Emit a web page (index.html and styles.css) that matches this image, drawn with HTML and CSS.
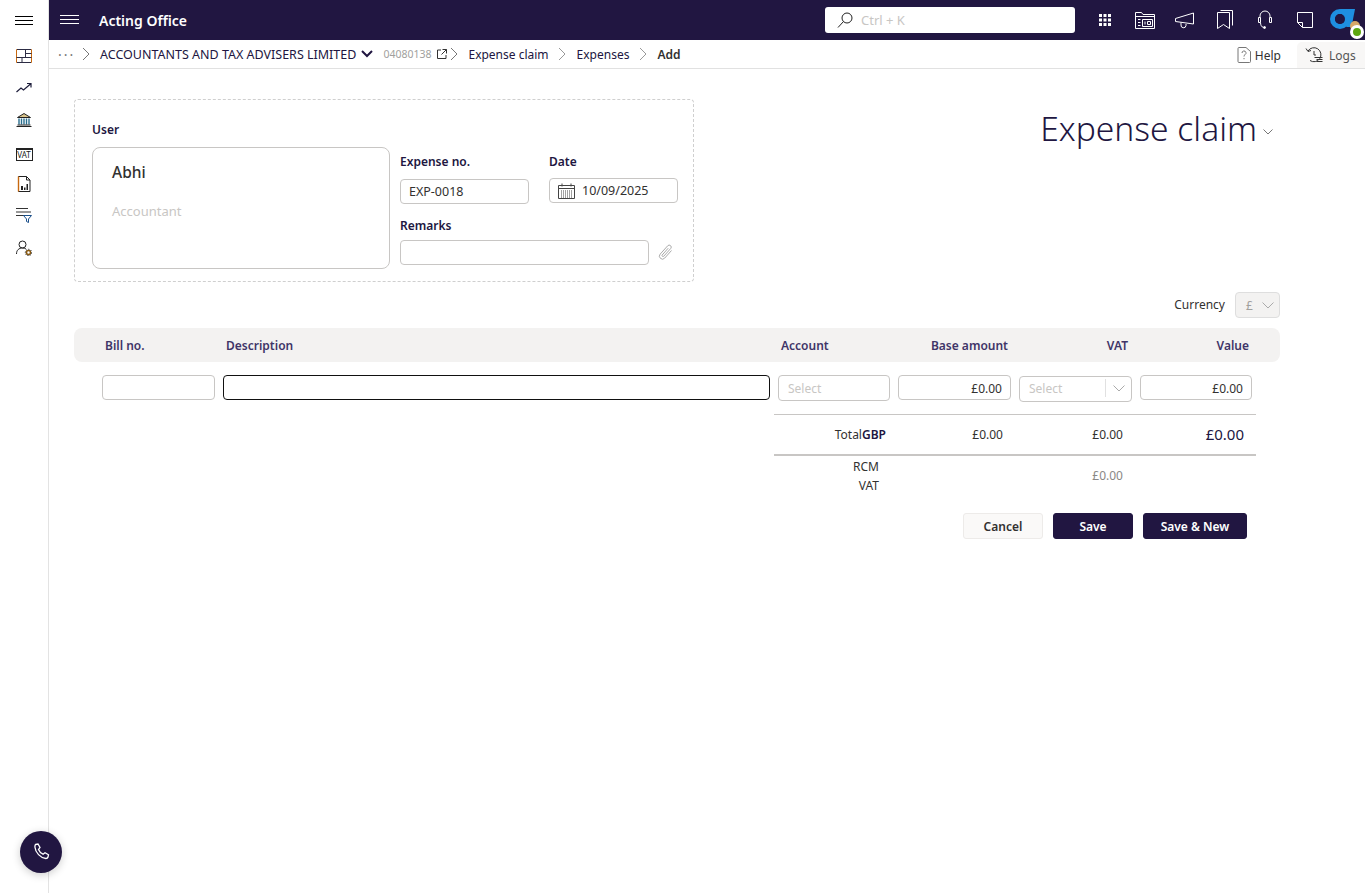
FILE: index.html
```html
<!DOCTYPE html>
<html lang="en">
<head>
    <meta charset="UTF-8">
    <meta name="viewport" content="width=device-width, initial-scale=1.0">
    <title>Acting Office - Expense claim</title>
    <link rel="stylesheet" href="styles.css">
</head>
<body>
    <!-- Left icon rail -->
    <aside class="rail">
        <svg class="rail-menu" width="18" height="10" viewBox="0 0 18 10"><path d="M0 .5h18M0 4.5h18M0 8.5h18" stroke="#000" fill="none"/></svg>
        <svg class="rail-icon" viewBox="0 0 16 16"><path d="M.5 1.5h15v13H.5z" fill="none" stroke="#c8690f"/><path d="M1 1.5h14M1 14.5h14M9.5 1.5v8M9.5 5.5h6M.5 9.5h15M6 9.5v5" fill="none" stroke="#2c2c44"/></svg>
        <svg class="rail-icon" viewBox="0 0 16 16"><path d="M.5 12l4.5-4 2.500 2 7-6M11 3.500h4v4" fill="none" stroke="#1c1c3a" stroke-width="1.200"/></svg>
        <svg class="rail-icon" viewBox="0 0 16 16"><path d="M1.500 5.500L8 1.500l6.500 4z" fill="#d9c48b" stroke="#222"/><path d="M3 6.500v6M5.500 6.500v6M8 6.500v6M10.500 6.500v6M13 6.500v6" stroke="#2a6f8f" stroke-width="1.400"/><path d="M1.500 13h13M.5 14.500h15" stroke="#222"/></svg>
        <span class="rail-vat">VAT</span>
        <svg class="rail-icon rail-report" viewBox="0 0 16 16"><path d="M2.500 .5h8l3.500 3.500v11.500h-11.500z" fill="none" stroke="#222"/><path d="M2.500 .5v15" stroke="#c8690f" stroke-width="1.400"/><path d="M10.500 .5v3.500h3.500" fill="none" stroke="#222"/><path d="M5 10h2v4h-2zM8 11.500h1.500v2.500h-1.500zM10.500 8h1.500v6h-1.500z" fill="#222"/></svg>
        <svg class="rail-icon rail-filter" viewBox="0 0 16 16"><path d="M0 1.500h12M0 5h15M0 8.500h8" fill="none" stroke="#333"/><path d="M7.500 8.500h8l-3 3.500v3.500l-2-1v-2.500z" fill="none" stroke="#1a4f8a"/></svg>
        <svg class="rail-icon" viewBox="0 0 16 16"><circle cx="6.500" cy="4.500" r="3.500" fill="none" stroke="#222"/><path d="M.5 14c0-4 2.500-6 6-6 1.500 0 2.500.4 3.500 1" fill="none" stroke="#222"/><circle cx="12.500" cy="12.500" r="2" fill="none" stroke="#8a5a12" stroke-width="1.500"/><circle cx="12.500" cy="12.500" r="3.200" fill="none" stroke="#222" stroke-dasharray="1.200 1.200"/></svg>
    </aside>

    <div class="main">
        <!-- Top bar -->
        <header class="topbar">
            <svg class="top-menu" width="19" height="10" viewBox="0 0 19 10"><path d="M0 .5h19M0 4.500h19M0 8.500h19" stroke="#fff" fill="none"/></svg>
            <span class="brand">Acting Office</span>
            <div class="search">
                <svg width="16" height="16" viewBox="0 0 16 16"><circle cx="10" cy="6" r="5" fill="none" stroke="#222"/><path d="M6.500 9.500l-5.500 6" stroke="#222" fill="none"/></svg>
                <span>Ctrl + K</span>
            </div>
            <div class="top-icons">
                <span class="top-btn"><svg width="14" height="14" viewBox="0 0 14 14" fill="#fff"><path d="M1 1h3v3h-3zM5.500 1h3v3h-3zM10 1h3v3h-3zM1 5.500h3v3h-3zM5.500 5.500h3v3h-3zM10 5.500h3v3h-3zM1 10h3v3h-3zM5.500 10h3v3h-3zM10 10h3v3h-3z"/></svg></span>
                <span class="top-btn"><svg width="20" height="20" viewBox="0 0 20 20" fill="none" stroke="#fff"><path d="M.5 18.500v-16h6l1.500 2h11.500v14z"/><path d="M1 6.500h18"/><path d="M7.500 9.500h10v7h-10z"/><path d="M3 9.500h2.500M3 12.500h2.500M3 15.500h2.500M10 11.500v3M12.500 11.500h3v3h-3z"/></svg></span>
                <span class="top-btn"><svg width="20" height="18" viewBox="0 0 20 18" fill="none" stroke="#fff"><path d="M.5 7.500l18-5.500v11l-18-2.500z"/><path d="M6 11.500v2.500a2.500 2.500 0 0 0 5 .5v-1.500"/></svg></span>
                <span class="top-btn"><svg width="16" height="20" viewBox="0 0 16 20" fill="none" stroke="#fff"><path d="M.5 2.500h12v16l-6-4-6 4z"/><path d="M3.500.5h12v15"/></svg></span>
                <span class="top-btn"><svg width="16" height="20" viewBox="0 0 16 20" fill="none" stroke="#fff"><path d="M3 7.500v-1.500a5 5 0 0 1 10 0v1.500"/><path d="M1.500 7.500h2v5h-2zM12.500 7.500h2v5h-2z"/><path d="M3.500 12.500c0 2.500 1 4.500 3 5"/><circle cx="7.500" cy="17.500" r="1" fill="#fff"/></svg></span>
                <span class="top-btn"><svg width="18" height="18" viewBox="0 0 18 18" fill="none" stroke="#fff"><path d="M1.500 1.500h15v15h-10l-5-5z"/><path d="M1.500 11.500h5v5"/></svg></span>
            </div>
            <div class="avatar">
                <svg width="25" height="25" viewBox="0 0 25 25"><circle cx="10" cy="12" r="7.500" fill="none" stroke="#1e8fe0" stroke-width="5"/><path d="M10 2h15l-3.500 18h-5z" fill="#1e8fe0"/><circle cx="10" cy="12" r="5" fill="#211641"/></svg>
                <span class="avatar-dot"></span>
                <span class="avatar-status"></span>
            </div>
        </header>

        <!-- Breadcrumb -->
        <nav class="crumbs">
            <span class="crumb-dots">&middot;&middot;&middot;</span>
            <svg class="chev" width="9" height="14" viewBox="0 0 9 14"><path d="M1 1l6 6-6 6" fill="none" stroke="#777"/></svg>
            <span class="crumb crumb-company">ACCOUNTANTS AND TAX ADVISERS LIMITED</span>
            <svg class="crumb-down" width="12" height="8" viewBox="0 0 12 8"><path d="M1 1l5 5 5-5" fill="none" stroke="#211641" stroke-width="2"/></svg>
            <span class="crumb-no">04080138</span>
            <svg class="crumb-ext" width="10" height="10" viewBox="0 0 10 10" fill="none" stroke="#333"><path d="M4 1h-3.500v8.500h8.500v-3.500M5.500.5h4v4M9.500.5l-5 5"/></svg>
            <svg class="chev chev-tight" width="9" height="14" viewBox="0 0 9 14"><path d="M1 1l6 6-6 6" fill="none" stroke="#777"/></svg>
            <span class="crumb">Expense claim</span>
            <svg class="chev chev-mid" width="9" height="14" viewBox="0 0 9 14"><path d="M1 1l6 6-6 6" fill="none" stroke="#999"/></svg>
            <span class="crumb">Expenses</span>
            <svg class="chev chev-last" width="9" height="14" viewBox="0 0 9 14"><path d="M1 1l6 6-6 6" fill="none" stroke="#999"/></svg>
            <span class="crumb-last">Add</span>
            <div class="crumb-actions">
                <span class="help">
                    <svg width="14" height="16" viewBox="0 0 14 16" fill="none" stroke="#777"><path d="M2 .5h7l4.500 4v10a1 1 0 0 1-1 1h-10.500a1 1 0 0 1-1-1v-13a1 1 0 0 1 1-1z"/><path d="M5 6a2 2 0 1 1 3 1.700c-.7.4-1 .8-1 1.800M7 11v1.200"/></svg>
                    Help
                </span>
                <span class="logs">
                    <svg width="18" height="16" viewBox="0 0 18 16" fill="none" stroke="#333"><path d="M3 4a7 7 0 1 1 2 9.500"/><path d="M1 1.500l2 3 3-1M9 4v4h2M9.500 10.500h8M11.500 12.500h6M11.500 14.500h6"/></svg>
                    Logs
                </span>
            </div>
        </nav>

        <main class="content">
            <div class="form-top">
                <section class="card">
                    <div class="user-col">
                        <label class="lbl">User</label>
                        <div class="user-box">
                            <div class="user-name">Abhi</div>
                            <div class="user-role">Accountant</div>
                        </div>
                    </div>
                    <div class="fields">
                        <div class="field-row">
                            <div class="field">
                                <label class="lbl">Expense no.</label>
                                <div class="input">EXP-0018</div>
                            </div>
                            <div class="field field-date">
                                <label class="lbl">Date</label>
                                <div class="input">
                                    <svg width="17" height="16" viewBox="0 0 17 16" fill="none" stroke="#444"><path d="M.5 2.500h16v13h-16zM.5 5.500h16M4 .5v3M13 .5v3"/><path d="M3 8h11M3 10h11M3 12h11M3 14h11" stroke-dasharray="1 1"/></svg>
                                    10/09/2025
                                </div>
                            </div>
                        </div>
                        <label class="lbl lbl-remarks">Remarks</label>
                        <div class="remarks-row">
                            <div class="input input-remarks"></div>
                            <svg width="16" height="17" viewBox="0 0 16 17" fill="none" stroke="#aaa"><path d="M13.500 6.500l-6.800 7.600a3 3 0 0 1-4.500-4l7.500-8.300a2 2 0 0 1 3 2.700l-7 7.800a1 1 0 0 1-1.500-1.300l6-6.800"/></svg>
                        </div>
                    </div>
                </section>
                <div class="doc-title">
                    <h1>Expense claim</h1>
                    <svg width="10" height="6" viewBox="0 0 10 6"><path d="M.5.500l4.500 4.500 4.500-4.500" fill="none" stroke="#777"/></svg>
                </div>
            </div>

            <div class="currency">
                <span class="currency-label">Currency</span>
                <div class="currency-box">
                    <span>&pound;</span>
                    <svg width="12" height="7" viewBox="0 0 12 7"><path d="M.5.500l5.500 5.500 5.500-5.500" fill="none" stroke="#aaa"/></svg>
                </div>
            </div>

            <div class="grid-row grid-head">
                <div>Bill no.</div>
                <div>Description</div>
                <div>Account</div>
                <div class="num">Base amount</div>
                <div class="num head-vat">VAT</div>
                <div class="num">Value</div>
            </div>
            <div class="grid-row grid-line">
                <div class="input"></div>
                <div class="input input-focus"></div>
                <div class="input placeholder select-account">Select</div>
                <div class="input num">&pound;0.00</div>
                <div class="input placeholder select-vat">
                    <span>Select</span>
                    <span class="select-arrow"><svg width="12" height="7" viewBox="0 0 12 7"><path d="M.5.500l5.500 5.500 5.500-5.500" fill="none" stroke="#aaa"/></svg></span>
                </div>
                <div class="input num">&pound;0.00</div>
            </div>

            <div class="totals">
                <div class="total-row">
                    <div class="total-label">Total<b>GBP</b></div>
                    <div>&pound;0.00</div>
                    <div>&pound;0.00</div>
                    <div class="total-big">&pound;0.00</div>
                </div>
                <div class="rcm-row">
                    <div class="rcm-label">RCM<br>VAT</div>
                    <div></div>
                    <div class="rcm-val">&pound;0.00</div>
                    <div></div>
                </div>
            </div>

            <div class="actions">
                <button class="btn btn-light">Cancel</button>
                <button class="btn">Save</button>
                <button class="btn btn-wide">Save &amp; New</button>
            </div>
        </main>
    </div>

    <!-- Floating call button -->
    <button class="call">
        <svg width="18" height="18" viewBox="0 0 18 18"><path d="M3.500 1.500l2.500-.5 2 3.500-1.500 2c.8 2 2.700 3.900 4.500 4.700l2-1.500 3.500 2-.6 2.600c-.2.700-1 1.200-2 1.200-5.500-.5-10.500-6-11-11.500 0-1 .2-2 .6-2.500z" fill="none" stroke="#fff" stroke-width="1.300"/></svg>
    </button>
</body>
</html>
```

FILE: styles.css
```css
* {
    box-sizing: border-box;
}
body {
    font-family: "Noto Sans", "Open Sans", sans-serif;
    font-size: 12px;
    color: #323130;
    background: white;
    margin: 0;
    height: 100vh;
    display: flex;
    overflow: hidden;
}

/* left rail */
.rail {
    width: 49px;
    flex-shrink: 0;
    border-right: 1px solid #e3e3e3;
    display: flex;
    flex-direction: column;
    align-items: center;
    padding-top: 16px;
}
.rail-menu {
    margin-bottom: 22px;
}
.rail-icon {
    width: 16px;
    height: 16px;
    margin-bottom: 16px;
}
.rail-vat {
    width: 17px;
    height: 13px;
    margin: 4px 0 15px;
    border: 1px solid #222;
    border-top-width: 2px;
    font-size: 8px;
    line-height: 10px;
    text-align: center;
    color: #222;
}
.rail-report {
    margin-bottom: 15px;
}
.rail-filter {
    margin-bottom: 17px;
}

.main {
    flex: 1;
    min-width: 0;
}

/* top bar */
.topbar {
    height: 40px;
    background: #211641;
    display: flex;
    align-items: center;
    padding-left: 11px;
}
.top-menu {
    flex-shrink: 0;
}
.brand {
    color: white;
    font-size: 14px;
    font-weight: 600;
    margin-left: 20px;
    width: 726px;
}
.search {
    width: 250px;
    height: 26px;
    background: white;
    border-radius: 3px;
    display: flex;
    align-items: center;
    gap: 8px;
    padding-left: 12px;
    color: #c8c6c4;
    font-size: 13px;
}
.top-icons {
    display: flex;
    margin-left: 10px;
}
.top-btn {
    width: 40px;
    height: 40px;
    display: flex;
    align-items: center;
    justify-content: center;
}
.avatar {
    position: relative;
    width: 30px;
    height: 40px;
    margin-left: 5px;
    padding-top: 7px;
}
.avatar-dot {
    position: absolute;
    left: 20px;
    top: 21px;
    width: 10px;
    height: 10px;
    border-radius: 50%;
    background: #d8a868;
}
.avatar-status {
    position: absolute;
    left: 20px;
    top: 25px;
    width: 14px;
    height: 14px;
    border-radius: 50%;
    background: #5da60f;
    border: 3px solid white;
}

/* breadcrumb */
.crumbs {
    height: 29px;
    border-bottom: 1px solid #e1e1e1;
    display: flex;
    align-items: center;
    padding-left: 9px;
    color: #211641;
}
.crumb-dots {
    font-size: 14px;
    letter-spacing: 2px;
    color: #777;
    width: 24px;
}
.chev {
    margin: 0 10px;
    flex-shrink: 0;
}
.chev:first-of-type {
    margin-left: 0;
}
.chev-tight {
    margin: 0 9px 0 3px;
}
.chev-mid {
    margin: 0 10px 0 9px;
}
.chev-last {
    margin: 0 9px 0 10px;
}
.crumb-company {
    font-size: 12.500px;
    margin-left: -1px;
}
.crumb-down {
    margin: 0 10px 0 5px;
}
.crumb-no {
    color: #a19f9d;
    font-size: 10.500px;
}
.crumb-ext {
    margin-left: 6px;
}
.crumb-last {
    font-weight: 600;
    color: #323130;
}
.crumb-actions {
    margin-left: auto;
    display: flex;
    align-items: center;
    align-self: flex-end;
    height: 26px;
}
.help,
.logs {
    display: flex;
    align-items: center;
    gap: 5px;
}
.help {
    margin-right: 16px;
    color: #323130;
}
.help svg {
    margin-left: 2px;
    margin-right: -1px;
}
.logs {
    width: 68px;
    height: 26px;
    padding-left: 8px;
    gap: 6px;
    background: #f8f7f6;
    border-radius: 5px 0 0 0;
    color: #555;
}

/* content */
.content {
    padding: 30px 85px 0 25px;
}
.form-top {
    display: flex;
    justify-content: space-between;
}
.card {
    width: 620px;
    height: 183px;
    border: 1px dashed #cfcfcf;
    border-radius: 4px;
    padding: 21px 15px 0 17px;
    display: flex;
    gap: 10px;
}
.lbl {
    display: block;
    font-weight: 600;
    color: #211641;
}
.user-box {
    width: 298px;
    height: 122px;
    margin-top: 9px;
    border: 1px solid #c8c6c4;
    border-radius: 8px;
    padding: 14px 19px;
}
.user-name {
    font-size: 15.500px;
    font-weight: 500;
    line-height: 20px;
}
.user-role {
    margin-top: 20px;
    font-size: 13px;
    color: #c8c6c4;
}
.fields {
    flex: 1;
    padding-top: 32px;
}
.field-row {
    display: flex;
    gap: 20px;
}
.field {
    width: 129px;
}
.input {
    height: 25px;
    border: 1px solid #c8c6c4;
    border-radius: 4px;
    padding: 0 8px;
    display: flex;
    align-items: center;
    background: white;
}
.field .input {
    margin-top: 9px;
    font-size: 12.500px;
}
.field-date .input {
    margin-top: 8px;
    gap: 7px;
}
.lbl-remarks {
    margin-top: 13px;
}
.remarks-row {
    display: flex;
    align-items: center;
    gap: 9px;
    margin-top: 6px;
}
.input-remarks {
    width: 249px;
}
.doc-title {
    display: flex;
    align-items: center;
    gap: 6px;
    height: 58px;
    padding-right: 7px;
}
.doc-title h1 {
    font-size: 33.600px;
    font-weight: 300;
    color: #211641;
    margin: 0;
}
.doc-title svg {
    margin-top: 8px;
}

.currency {
    display: flex;
    justify-content: flex-end;
    align-items: center;
    gap: 10px;
    margin-top: 10px;
}
.currency-label {
    padding-bottom: 2px;
}
.currency-box {
    width: 45px;
    height: 26px;
    border: 1px solid #dedede;
    border-radius: 4px;
    background: #f3f2f1;
    color: #a19f9d;
    display: flex;
    align-items: center;
    justify-content: space-between;
    padding: 0 5px 0 10px;
}

/* line grid */
.grid-row {
    display: grid;
    grid-template-columns: 113px 547px 112px 113px 113px 112px;
    column-gap: 8px;
    padding-left: 28px;
}
.grid-head {
    height: 34px;
    margin-top: 10px;
    background: #f3f2f1;
    border-radius: 8px;
    align-items: center;
    color: #3f3568;
    font-weight: 600;
}
.grid-head > div {
    padding: 0 3px;
}
.grid-head > .head-vat {
    padding-right: 4px;
}
.num {
    text-align: right;
    justify-content: flex-end;
}
.grid-line {
    margin-top: 13px;
    align-items: start;
}
.grid-line .input {
    padding-top: 1px;
}
.placeholder {
    color: #c8c6c4;
    padding: 0 9px;
}
.input-focus {
    border-color: #111;
}
.select-account {
    height: 26px;
}
.grid-line .select-vat {
    height: 26px;
    margin-top: 1px;
    justify-content: space-between;
    padding: 0 0 2px 9px;
}
.select-arrow {
    width: 26px;
    height: 18px;
    border-left: 1px solid #e1e1e1;
    display: flex;
    align-items: center;
    justify-content: center;
}

/* totals */
.totals {
    width: 482px;
    margin: 12px 0 0 700px;
    border-top: 1px solid #c8c6c4;
}
.total-row,
.rcm-row {
    display: grid;
    grid-template-columns: 112px 117px 120px 121px;
    text-align: right;
}
.total-row {
    height: 41px;
    align-items: center;
    border-bottom: 2px solid #c8c6c4;
}
.total-label b {
    font-weight: 600;
    color: #211641;
}
.total-big {
    font-size: 15px;
    color: #211641;
    padding-bottom: 2px;
}
.rcm-row {
    padding-top: 1px;
    align-items: center;
    line-height: 19px;
}
.rcm-label {
    padding-right: 7px;
}
.rcm-val {
    color: #8a8886;
    padding-bottom: 2px;
}

.actions {
    display: flex;
    justify-content: flex-end;
    gap: 10px;
    margin: 18px 33px 0 0;
}
.btn {
    width: 80px;
    height: 26px;
    border: 1px solid #211641;
    border-radius: 3px;
    background: #211641;
    color: white;
    font-family: inherit;
    font-size: 12px;
    font-weight: 600;
    padding: 0;
}
.btn-light {
    background: #faf9f8;
    border-color: #edebe9;
    color: #323130;
}
.btn-wide {
    width: 104px;
}

.call {
    position: fixed;
    left: 20px;
    bottom: 20px;
    width: 42px;
    height: 42px;
    border: none;
    border-radius: 50%;
    background: #211641;
    box-shadow: 0px 2px 8px rgba(0, 0, 0, 0.2);
    display: flex;
    align-items: center;
    justify-content: center;
    padding: 0;
}
```
